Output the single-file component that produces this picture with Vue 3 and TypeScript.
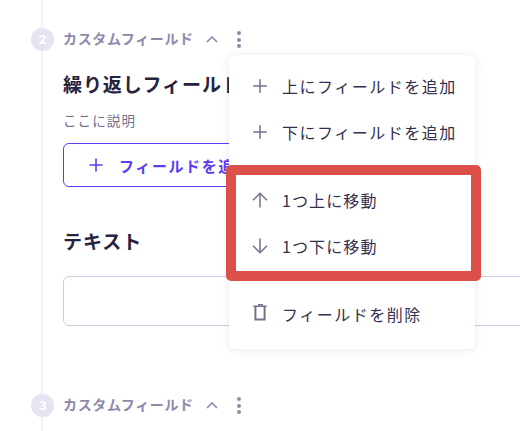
<script setup lang="ts">
interface MenuItem { label: string; icon: 'plus' | 'up' | 'down' }
const addItems: MenuItem[] = [
  { label: '上にフィールドを追加', icon: 'plus' },
  { label: '下にフィールドを追加', icon: 'plus' },
]
const moveItems: MenuItem[] = [
  { label: '1つ上に移動', icon: 'up' },
  { label: '1つ下に移動', icon: 'down' },
]
const iconPaths: Record<MenuItem['icon'], string> = {
  plus: 'M8 1.3v13.4M1.3 8h13.4',
  up: 'M8 1.5v14M1 8.2l7-7 7 7',
  down: 'M8 .5v14M1 7.8l7 7 7-7',
}
</script>

<template>
  <div class="page">
    <div class="rail">
      <section class="step first">
        <header class="step-head">
          <span class="badge">2</span>
          <span class="step-title">カスタムフィールド</span>
          <svg class="chev" viewBox="0 0 12 7" width="12" height="7"><path d="M1 6l5-5 5 5" fill="none" stroke="#8e89ac" stroke-width="1.6" /></svg>
          <span class="dots"><i></i><i></i><i></i></span>
        </header>
        <h2 class="field-title">繰り返しフィールド</h2>
        <p class="desc">ここに説明</p>
        <button class="add-btn">
          <svg viewBox="0 0 16 16" width="16" height="16"><path d="M8 1.5v13M1.5 8h13" fill="none" stroke="#5b3df5" stroke-width="1.6" /></svg>
          <span>フィールドを追加</span>
        </button>
        <h2 class="field-title text-title">テキスト</h2>
        <div class="text-input"></div>
      </section>
      <section class="step">
        <header class="step-head">
          <span class="badge">3</span>
          <span class="step-title">カスタムフィールド</span>
          <svg class="chev" viewBox="0 0 12 7" width="12" height="7"><path d="M1 6l5-5 5 5" fill="none" stroke="#8e89ac" stroke-width="1.6" /></svg>
          <span class="dots"><i></i><i></i><i></i></span>
        </header>
      </section>
    </div>

    <div class="menu">
      <div v-for="item in addItems" :key="item.label" class="menu-item">
        <svg viewBox="0 0 16 16" width="16" height="16"><path :d="iconPaths[item.icon]" fill="none" stroke="#74708f" stroke-width="1.5" /></svg>
        <span>{{ item.label }}</span>
      </div>
      <div class="move-group">
        <div v-for="item in moveItems" :key="item.label" class="menu-item">
          <svg viewBox="0 0 16 16" width="16" height="16"><path :d="iconPaths[item.icon]" fill="none" stroke="#74708f" stroke-width="1.5" /></svg>
          <span>{{ item.label }}</span>
        </div>
      </div>
      <div class="menu-item delete">
        <svg class="trash" viewBox="0 0 16 17" width="16" height="17">
          <path d="M6 .6h5M1.3 2.2h13.4" fill="none" stroke="#74708f" stroke-width="1.4" />
          <path d="M3.4 3v12.6h9.2V3" fill="none" stroke="#74708f" stroke-width="2" />
        </svg>
        <span>フィールドを削除</span>
      </div>
    </div>
    <div class="highlight"></div>
  </div>
</template>

<style>
html, body { margin: 0; background: #fff; }
</style>

<style scoped>
.page {
  position: relative;
  width: 520px;
  height: 431px;
  overflow: hidden;
  background: #fff;
  font-family: "Noto Sans CJK JP", "Noto Sans", sans-serif;
  color: #26233f;
}
.rail {
  box-sizing: border-box;
  height: 431px;
  margin-left: 41px;
  padding: 28px 0 0 20px;
  border-left: 2px solid #f3f2f9;
}
.step-head {
  display: flex;
  align-items: center;
  height: 23px;
  position: relative;
}
.badge {
  position: absolute;
  left: -32px;
  top: 0;
  width: 23px;
  height: 23px;
  border-radius: 50%;
  background: #e6e4f2;
  color: #fff;
  font: 700 12px/23px "Inter", sans-serif;
  text-align: center;
}
.step-title {
  font-size: 14px;
  line-height: 21px;
  margin-bottom: 2px;
  font-weight: 700;
  letter-spacing: 0.65px;
  color: #8e89ac;
  white-space: nowrap;
}
.chev { margin-left: 12px; margin-bottom: 1px; }
.dots {
  display: flex;
  flex-direction: column;
  gap: 2.2px;
  margin-left: 19px;
}
.dots i {
  display: block;
  width: 4px;
  height: 4px;
  border-radius: 50%;
  background: #8e89ac;
}
.field-title {
  margin: 19px 0 0;
  font-size: 19px;
  line-height: 28px;
  font-weight: 700;
  letter-spacing: 0.9px;
  white-space: nowrap;
}
.desc {
  margin: 12px 0 0;
  font-size: 13.5px;
  line-height: 20px;
  letter-spacing: 1.1px;
  color: #74708f;
}
.add-btn {
  display: flex;
  align-items: center;
  gap: 15px;
  box-sizing: border-box;
  width: 300px;
  height: 44px;
  margin-top: 13px;
  padding: 0 0 0 24px;
  background: #fff;
  border: 1px solid #5b3df5;
  border-radius: 6px;
  color: #5b3df5;
  font-family: inherit;
  font-size: 15px;
  font-weight: 700;
  letter-spacing: 1.6px;
  white-space: nowrap;
}
.text-title { margin-top: 40px; }
.text-input {
  box-sizing: border-box;
  width: 500px;
  height: 50px;
  margin-top: 21px;
  border: 1px solid #cfc9e4;
  border-radius: 6px;
  background: #fff;
}
.step:not(.first) { margin-top: 68px; }
.menu {
  position: absolute;
  left: 229px;
  top: 55px;
  box-sizing: border-box;
  width: 246px;
  height: 294px;
  padding: 8px 0;
  background: #fff;
  border-radius: 6px;
  box-shadow: 0 1px 8px rgba(60, 50, 120, 0.12);
}
.menu-item {
  display: flex;
  align-items: center;
  gap: 14px;
  height: 46px;
  padding-left: 23px;
  font-size: 16px;
  letter-spacing: 1.5px;
  color: #33304d;
  white-space: nowrap;
}
.trash { margin-bottom: 3px; }
.move-group { margin-top: 22px; letter-spacing: 1.1px; }
.move-group .menu-item { letter-spacing: inherit; }
.delete { margin-top: 22px; }
.highlight {
  position: absolute;
  left: 226px;
  top: 165px;
  box-sizing: border-box;
  width: 254.5px;
  height: 116px;
  border: 10px solid #dd4f49;
  border-radius: 5px;
}
</style>
